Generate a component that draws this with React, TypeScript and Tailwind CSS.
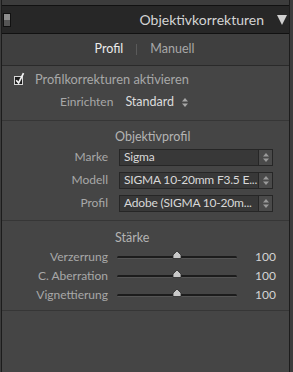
import React from "react";

const font = { fontFamily: "Lato, 'Segoe UI', 'Noto Sans', sans-serif" };

function UpDown({ className = "" }: { className?: string }) {
  return (
    <svg width="6" height="9" viewBox="0 0 6 9" className={className}>
      <polygon points="3,0 6,3.5 0,3.5" fill="currentColor" />
      <polygon points="0,5.5 6,5.5 3,9" fill="currentColor" />
    </svg>
  );
}

function Select({ value }: { value: string }) {
  return (
    <div className="ml-[11px] flex h-[17px] w-[154px] items-stretch border border-[#262626] bg-[#383838]">
      <div className="flex flex-1 items-center overflow-hidden whitespace-nowrap pl-[4px] text-[12px] tracking-[-0.2px] text-[#d8d8d8]">
        {value}
      </div>
      <div className="flex w-[14px] shrink-0 items-center justify-center border-l border-[#262626] bg-[#4a4a4a] text-[#9a9a9a]">
        <UpDown />
      </div>
    </div>
  );
}

function SliderRow({ label, value }: { label: string; value: number }) {
  return (
    <div className="flex h-[18px] items-center">
      <div className="w-[106px] text-right text-[12px] text-[#a8a8a8]">{label}</div>
      <div className="relative ml-[9px] h-[3px] w-[120px] rounded-full border-b border-[#555] bg-[#1c1c1c]">
        <svg width="10" height="8" viewBox="0 0 10 8" className="absolute left-[55px] top-[-5px]">
          <polygon points="5,0 9,4 9,7.5 1,7.5 1,4" fill="#c9c9c9" stroke="#2a2a2a" strokeWidth="0.8" />
        </svg>
      </div>
      <div className="ml-auto pr-[13px] text-[12px] text-[#d4d4d4]">{value}</div>
    </div>
  );
}

function Divider() {
  return <div className="h-[1px] bg-[#363636]" />;
}

export default function App() {
  return (
    <div className="h-[372px] w-[293px] overflow-hidden bg-[#3c3c3c]" style={font}>
      <div className="ml-[1px] mr-[3px] flex h-full flex-col border-x border-[#1c1c1c]">
        {/* top strip of panel above */}
        <div className="h-[6px] shrink-0 border-b border-[#111] bg-[#3c3c3c]" />

        {/* header */}
        <div className="flex h-[28px] shrink-0 items-center border-b border-[#111] bg-[#272727]">
          <div className="ml-[1px] flex h-[14px] w-[8px] flex-col border border-[#111]">
            <div className="flex-1 bg-[#8e8e8e]" />
            <div className="flex-1 bg-[#555]" />
          </div>
          <div className="ml-auto text-[14px] text-[#d4d4d4]">Objektivkorrekturen</div>
          <svg width="10" height="10" viewBox="0 0 10 10" className="ml-[13px] mr-[2px]">
            <polygon points="0,0 10,0 5,10" fill="#d0d0d0" />
          </svg>
        </div>

        {/* tabs */}
        <div className="flex h-[32px] shrink-0 items-center justify-center gap-[13px] border-b border-[#2a2a2a] bg-[#3f3f3f] pr-[2px] text-[12.5px]">
          <span className="text-[#ececec]">Profil</span>
          <span className="h-[11px] w-[1px] bg-[#5a5a5a]" />
          <span className="text-[#a8a8a8]">Manuell</span>
        </div>

        <div className="flex flex-1 flex-col bg-[#454545]">
          {/* enable */}
          <div className="pb-[9px] pt-[5px]">
            <div className="flex h-[18px] items-center">
              <svg width="14" height="14" viewBox="0 0 14 14" className="ml-[11px] mt-[-3px]">
                <rect x="1.5" y="4.5" width="8" height="8" fill="#1e1e1e" stroke="#d6d6d6" strokeWidth="1" />
                <path d="M3.2 8.2 L5.6 11 L10.5 1.2" fill="none" stroke="#f2f2f2" strokeWidth="1.7" />
              </svg>
              <span className="ml-[8px] text-[12.8px] text-[#a8a8a8]">Profilkorrekturen aktivieren</span>
            </div>
            <div className="mt-[4px] flex h-[18px] items-center">
              <span className="ml-[58px] text-[12px] text-[#a8a8a8]">Einrichten</span>
              <span className="ml-[12px] text-[12.5px] text-[#dcdcdc]">Standard</span>
              <UpDown className="ml-[8px] text-[#a8a8a8]" />
            </div>
          </div>
          <Divider />

          {/* lens profile */}
          <div className="pb-[8px] pt-[7px]">
            <div className="flex h-[18px] items-center pl-[113px] text-[12.5px] text-[#b4b4b4]">Objektivprofil</div>
            <div className="mt-[2px] flex flex-col gap-[5px]">
              {[
                ["Marke", "Sigma"],
                ["Modell", "SIGMA 10-20mm F3.5 E..."],
                ["Profil", "Adobe (SIGMA 10-20m..."],
              ].map(([label, value]) => (
                <div key={label} className="flex h-[18px] items-center">
                  <div className="w-[106px] text-right text-[12px] text-[#a8a8a8]">{label}</div>
                  <Select value={value} />
                </div>
              ))}
            </div>
          </div>
          <Divider />

          {/* amount */}
          <div className="pb-[6px] pt-[8px]">
            <div className="flex h-[18px] items-center pl-[113px] text-[12.5px] text-[#b4b4b4]">Stärke</div>
            <div className="mt-[1px] flex flex-col gap-[1px]">
              <SliderRow label="Verzerrung" value={100} />
              <SliderRow label="C. Aberration" value={100} />
              <SliderRow label="Vignettierung" value={100} />
            </div>
          </div>
          <Divider />
        </div>
      </div>
    </div>
  );
}
